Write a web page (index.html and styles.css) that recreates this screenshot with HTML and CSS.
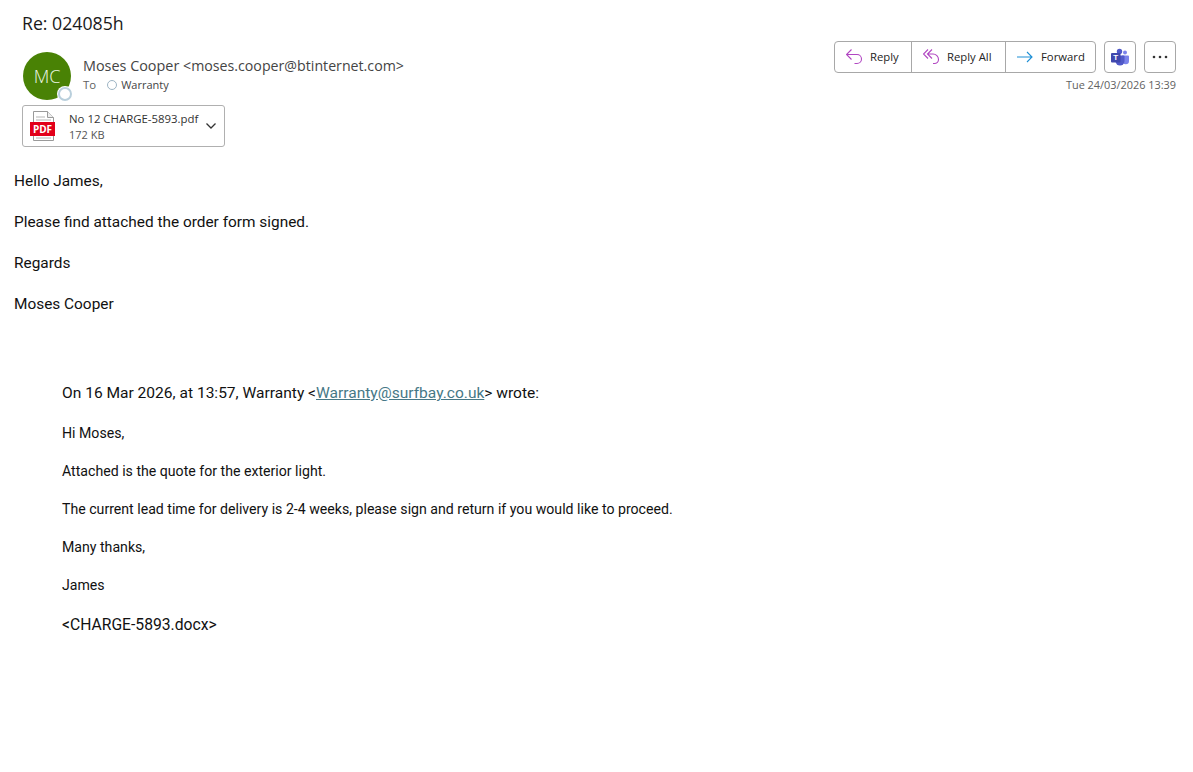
FILE: index.html
```html
<!DOCTYPE html>
<html lang="en">
<head>
    <meta charset="UTF-8">
    <meta name="viewport" content="width=device-width, initial-scale=1.0">
    <title>Re: 024085h</title>
    <link rel="stylesheet" href="styles.css">
</head>
<body>
    <header class="mail-header">
        <h1 class="subject">Re: 024085h</h1>
        <div class="header-row">
            <div class="sender">
                <div class="avatar">MC<span class="presence"></span></div>
                <div class="sender-text">
                    <div class="sender-name">Moses Cooper <span class="sender-mail">&lt;moses.cooper@btinternet.com&gt;</span></div>
                    <div class="recipients">To <span class="recipient-dot"></span> <span class="recipient">Warranty</span></div>
                </div>
            </div>
            <div class="actions">
                <div class="action-buttons">
                    <div class="btn-group">
                        <button class="btn btn-reply">
                            <svg width="17" height="16" viewBox="0 0 17 16" fill="none" stroke="#b146c2" stroke-width="1.1"><path d="M5.500 .5.5 5.500l5 5M.5 5.500h10.500a4.500 4.500 0 0 1 0 9H8.500"/></svg>
                            Reply
                        </button>
                        <button class="btn btn-reply-all">
                            <svg width="17" height="16" viewBox="0 0 17 16" fill="none" stroke="#b146c2" stroke-width="1.1"><path d="M5 .5.5 5 5 9.500M9 .5 4.500 5 9 9.500M4.500 5H10a5.500 5.500 0 0 1 5.500 5.500 4 4 0 0 1-4 4H10"/></svg>
                            Reply All
                        </button>
                        <button class="btn btn-forward">
                            <svg width="16" height="12" viewBox="0 0 16 12" fill="none" stroke="#1e8fd5" stroke-width="1.1"><path d="M0 6h15M10 1l5 5-5 5"/></svg>
                            Forward
                        </button>
                    </div>
                    <button class="btn-square">
                        <svg width="18" height="18" viewBox="0 0 18 18"><circle cx="14" cy="4.500" r="2" fill="#7b83eb"/><path d="M11 7.500h6a1 1 0 0 1 1 1V13a3.200 3.200 0 0 1-3.200 3.200A3.800 3.800 0 0 1 11 12.500z" fill="#7b83eb"/><circle cx="8.500" cy="3.500" r="2.700" fill="#5059c9"/><path d="M4.500 7.500h8a1 1 0 0 1 1 1V13a4.500 4.500 0 0 1-9 0z" fill="#5059c9"/><rect x="0" y="5" width="9.500" height="9.500" rx="1" fill="#3f47ad"/><text x="4.750" y="12.300" class="teams-t">T</text></svg>
                    </button>
                    <button class="btn-square">
                        <svg width="16" height="4" viewBox="0 0 16 4" fill="#333"><circle cx="2" cy="2" r="1.300"/><circle cx="8" cy="2" r="1.300"/><circle cx="14" cy="2" r="1.300"/></svg>
                    </button>
                </div>
                <div class="sent-date">Tue 24/03/2026 13:39</div>
            </div>
        </div>
        <div class="attachment">
            <svg class="pdf-icon" width="26" height="30" viewBox="0 0 26 30">
                <path d="M3.500 .5h14l6 6v23h-20z" fill="#fff" stroke="#9a9a9a"/>
                <path d="M17.500 .5v6h6" fill="#eee" stroke="#9a9a9a"/>
                <path d="M6 6h9M6 9h15M6 27h15" stroke="#b5b5b5"/>
                <rect x="0" y="11" width="25" height="14" fill="#e2001a"/>
                <text x="12.500" y="22" class="pdf-label">PDF</text>
            </svg>
            <div class="attachment-text">
                <div class="attachment-name">No 12 CHARGE-5893.pdf</div>
                <div class="attachment-size">172 KB</div>
            </div>
            <svg class="chevron" width="10" height="6" viewBox="0 0 10 6" fill="none" stroke="#333" stroke-width="1.300"><path d="M.5 .5 5 5 9.500 .5"/></svg>
        </div>
    </header>

    <main class="mail-body">
        <p>Hello James,</p>
        <p>Please find attached the order form signed.</p>
        <p>Regards</p>
        <p>Moses Cooper</p>

        <div class="quoted">
            <p class="quote-head">On 16 Mar 2026, at 13:57, Warranty &lt;<a href="#">Warranty@surfbay.co.uk</a>&gt; wrote:</p>
            <p class="small">Hi Moses,</p>
            <p class="small">Attached is the quote for the exterior light.</p>
            <p class="small">The current lead time for delivery is 2-4 weeks, please sign and return if you would like to proceed.</p>
            <p class="small">Many thanks,</p>
            <p class="small">James</p>
            <p class="quote-file">&lt;CHARGE-5893.docx&gt;</p>
        </div>
    </main>
</body>
</html>
```

FILE: styles.css
```css
body {
    margin: 0;
    background-color: #fff;
    color: #111;
    font-family: "Open Sans", "Noto Sans", sans-serif;
}

.mail-header {
    padding: 11px 17px 0 22px;
}
.subject {
    margin: 0;
    height: 24px;
    font-size: 17.700px;
    font-weight: 400;
    line-height: 24px;
    color: #1a1a1a;
}
.header-row {
    display: flex;
    justify-content: space-between;
    align-items: flex-start;
    margin-top: 6px;
    height: 64px;
}
.sender {
    display: flex;
    margin-top: 11px;
    margin-left: 1px;
}
.avatar {
    position: relative;
    width: 48px;
    height: 48px;
    border-radius: 50%;
    background-color: #498205;
    color: #eef6e6;
    font-size: 18px;
    font-weight: 300;
    line-height: 48px;
    text-align: center;
}
.presence {
    position: absolute;
    right: -1px;
    bottom: -1px;
    width: 10px;
    height: 10px;
    border: 2px solid #b9cfdc;
    border-radius: 50%;
    background-color: #fff;
    box-shadow: 0 0 0 1px #fff;
}
.sender-text {
    margin-left: 12px;
}
.sender-name {
    margin-top: 4px;
    font-size: 14.400px;
    line-height: 20px;
    color: #444;
}
.sender-mail {
    font-size: 14.200px;
}
.recipients {
    margin-top: 0;
    font-size: 11.400px;
    line-height: 18px;
    color: #616161;
    display: flex;
    align-items: center;
}
.recipient-dot {
    width: 8px;
    height: 8px;
    margin: 0 4px 0 11px;
    border: 1px solid #9db4c4;
    border-radius: 50%;
}
.recipient {
    font-size: 11px;
    color: #444;
}
.actions {
    display: flex;
    flex-direction: column;
    align-items: flex-end;
}
.action-buttons {
    display: flex;
    gap: 8px;
}
.btn-group {
    display: flex;
    height: 32px;
    border: 1px solid #a8a8a8;
    border-radius: 4px;
    box-sizing: border-box;
}
.btn {
    display: flex;
    align-items: center;
    gap: 7px;
    box-sizing: border-box;
    padding: 0 0 1px 11px;
    border: none;
    border-left: 1px solid #a8a8a8;
    background: none;
    color: #242424;
    font-family: inherit;
    font-size: 11.300px;
}
.btn:first-child {
    border-left: none;
}
.btn-reply {
    width: 76px;
}
.btn-reply-all {
    width: 94px;
}
.btn-forward {
    width: 90px;
    gap: 8px;
}
.btn-square {
    display: flex;
    align-items: center;
    justify-content: center;
    width: 32px;
    height: 32px;
    padding: 0;
    border: 1px solid #a8a8a8;
    border-radius: 4px;
    background: none;
}
.teams-t {
    fill: #fff;
    font-size: 8px;
    font-weight: 700;
    text-anchor: middle;
}
.sent-date {
    margin-top: 4px;
    font-size: 10.900px;
    line-height: 16px;
    color: #616161;
}
.attachment {
    display: flex;
    align-items: center;
    box-sizing: border-box;
    width: 203px;
    height: 42px;
    padding: 0 7px;
    border: 1px solid #b0b0b0;
    border-radius: 3px;
}
.pdf-icon {
    flex: none;
}
.pdf-label {
    fill: #fff;
    font-size: 10px;
    font-weight: 700;
    text-anchor: middle;
}
.attachment-text {
    flex: 1;
    margin-left: 13px;
    padding-top: 1px;
    font-size: 11.400px;
    line-height: 16px;
    color: #333;
}
.attachment-size {
    font-size: 11px;
    color: #555;
}
.chevron {
    flex: none;
    margin-right: 1px;
}

.mail-body {
    padding: 24px 14px 0;
    font-family: Roboto, "Open Sans", sans-serif;
    font-size: 15.400px;
    line-height: 20px;
}
.mail-body p {
    margin: 0 0 21px;
}
.quoted {
    padding: 48px 0 0 48px;
}
.mail-body .quote-head {
    margin-bottom: 21px;
    font-size: 15.550px;
}
.mail-body .small {
    margin-bottom: 20px;
    font-size: 14.140px;
    line-height: 18px;
}
.mail-body .quote-file {
    margin-top: 21px;
    font-size: 15.700px;
}
.quoted a {
    color: #467886;
}
```
